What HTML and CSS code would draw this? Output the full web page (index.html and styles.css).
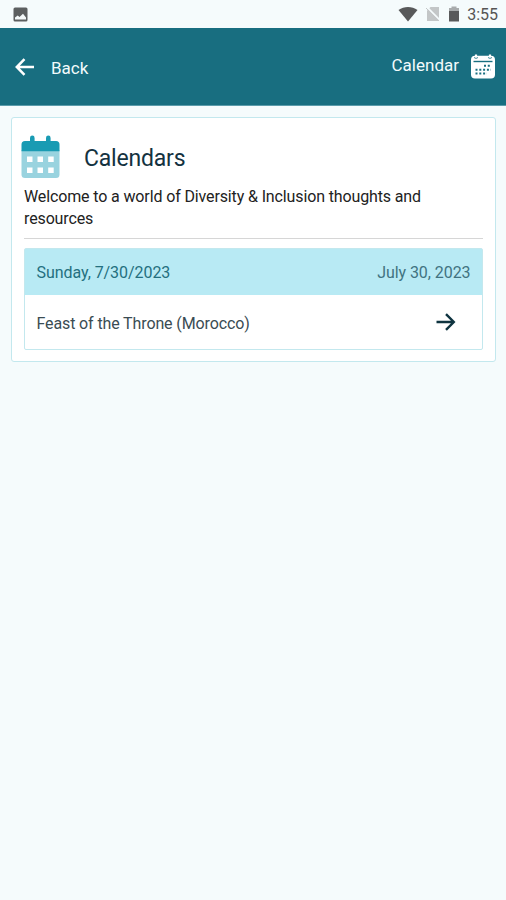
FILE: index.html
```html
<!DOCTYPE html>
<html lang="en">
<head>
  <meta charset="UTF-8" />
  <meta name="viewport" content="width=device-width, initial-scale=1.0" />
  <title>Calendar</title>
  <link rel="stylesheet" href="styles.css">
</head>
<body>

  <div class="statusbar">
    <svg class="status-photo" width="15" height="15" viewBox="0 0 15 15">
      <rect x="0.5" y="0.5" width="14" height="14" rx="1.5" fill="#5c5f60"/>
      <path d="M2 12.5V10.5L4.7 8.5L6.5 10L10 6.8L13 10.5V12.5Z" fill="#f4f9fa"/>
    </svg>
    <div class="status-icons">
      <svg width="20" height="16" viewBox="0 0 20 16">
        <path d="M0.5 4C6 0 14 0 19.5 4L10 15.5Z" fill="#58595a"/>
      </svg>
      <svg width="16" height="16" viewBox="0 0 16 16">
        <path d="M5.5 1H14V15H2V4.5Z" fill="#c3c6c7"/>
        <path d="M2 1.2L15.5 14.7" stroke="#f5fbfc" stroke-width="1.8"/>
        <path d="M1 2L14 15" stroke="#c3c6c7" stroke-width="1"/>
      </svg>
      <svg width="12" height="16" viewBox="0 0 12 16">
        <path d="M3.5 0.5H8.5V2H11V5H1V2H3.5Z" fill="#a8abac"/>
        <path d="M1 5H11V15.5H1Z" fill="#58595a"/>
      </svg>
      <span class="status-time">3:55</span>
    </div>
  </div>

  <div class="topbar">
    <a href="#" class="back-link">
      <svg width="20" height="18" viewBox="0 0 20 18">
        <path d="M19 9H2M9.5 1.2L1.8 9L9.5 16.8" fill="none" stroke="#fff" stroke-width="2.5"/>
      </svg>
      <span>Back</span>
    </a>
    <a href="#" class="calendar-link">
      <span>Calendar</span>
      <svg width="24" height="25" viewBox="0 0 24 25">
        <path d="M5 0.5V4M19 0.5V4" stroke="#fff" stroke-width="2.2"/>
        <rect x="0" y="1.8" width="24" height="22.7" rx="4" fill="#fff"/>
        <path d="M3 3.5Q5 5.4 7 3.5M17 3.5Q19 5.4 21 3.5" fill="none" stroke="#186e80" stroke-width="0.8"/>
        <path d="M2.5 7.5H21.5" stroke="#186e80" stroke-width="1.4"/>
        <path d="M13 11.7H20M4.5 15.7H20M4.5 19.5H16" stroke="#186e80" stroke-width="2" stroke-dasharray="2 1.8"/>
      </svg>
    </a>
  </div>

  <div class="card">
    <div class="card-title">
      <svg width="39" height="44" viewBox="0 0 39 44">
        <path d="M0.5 15H38.5V39.5Q38.5 43 35 43H4Q0.5 43 0.5 39.5Z" fill="#99d3df"/>
        <path d="M0.5 16.3V9.5Q0.5 6 4 6H9V3Q9 0.6 11.3 0.6T13.6 3V6H25V3Q25 0.6 27.3 0.6T29.6 3V6H35Q38.5 6 38.5 9.5V16.3Z" fill="#199bb3"/>
        <path d="M6 21.5h5.5v5.5H6z M16.5 21.5h5.5v5.5h-5.5z M27.2 21.5h5.5v5.5h-5.5z M6 32.5h5.5v5.5H6z M16.5 32.5h5.5v5.5h-5.5z M27.2 32.5h5.5v5.5h-5.5z" fill="#fff"/>
      </svg>
      <h1>Calendars</h1>
    </div>
    <p class="card-text">Welcome to a world of Diversity &amp; Inclusion thoughts and resources</p>

    <div class="event">
      <div class="event-header">
        <span>Sunday, 7/30/2023</span>
        <span class="event-date">July 30, 2023</span>
      </div>
      <a href="#" class="event-row">
        <span>Feast of the Throne (Morocco)</span>
        <svg width="20" height="18" viewBox="0 0 20 18">
          <path d="M0.5 9H18M10 1.2L17.8 9L10 16.8" fill="none" stroke="#0f3440" stroke-width="2.4"/>
        </svg>
      </a>
    </div>
  </div>

</body>
</html>
```

FILE: styles.css
```css
:root {
  --bg: #f5fbfc;
  --teal: #186e80;
  --light-blue: #b8eaf4;
  --card-border: #c3e8ee;
}

* {
  box-sizing: border-box;
}

body {
  margin: 0;
  min-height: 100vh;
  background-color: var(--bg);
  font-family: Roboto, sans-serif;
  font-size: 16px;
  color: #222;
}

a {
  color: inherit;
  text-decoration: none;
}

svg {
  display: block;
  flex-shrink: 0;
}

/* Status bar */
.statusbar {
  display: flex;
  justify-content: space-between;
  align-items: center;
  height: 28px;
  padding: 0 8px 0 13px;
}

.status-icons {
  display: flex;
  align-items: center;
  gap: 7px;
}

.status-time {
  font-size: 16px;
  line-height: 20px;
  color: #555;
  padding-top: 2px;
}

/* Header */
.topbar {
  display: flex;
  justify-content: space-between;
  align-items: center;
  height: 78px;
  padding: 0 11px 0 15px;
  background-color: var(--teal);
  border-bottom: 1px solid #5b9cab;
  color: #f2fbfc;
}

.back-link,
.calendar-link {
  display: flex;
  align-items: center;
}

.back-link {
  gap: 16px;
  font-size: 17px;
}

.back-link span {
  padding-top: 2px;
}

.calendar-link {
  gap: 12px;
  font-size: 17px;
}

.calendar-link span {
  padding-bottom: 3px;
}

/* Card */
.card {
  margin: 11px 10px 0 11px;
  padding: 17px 12px 11px;
  background-color: #fff;
  border: 1.5px solid var(--card-border);
  border-radius: 3px;
}

.card-title {
  display: flex;
  align-items: center;
  gap: 24px;
  margin-left: -3px;
}

.card-title h1 {
  margin: 0;
  padding-top: 2px;
  font-size: 23px;
  font-weight: 400;
  letter-spacing: -0.2px;
  color: #14323f;
}

.card-text {
  margin: 7px 0 9px;
  padding-bottom: 8px;
  border-bottom: 1px solid #d6d6d6;
  font-size: 16px;
  line-height: 22px;
  letter-spacing: -0.13px;
}

.event {
  border: 1px solid var(--card-border);
  border-radius: 2px;
}

.event-header,
.event-row {
  display: flex;
  justify-content: space-between;
  align-items: center;
}

.event-header {
  height: 46px;
  padding: 0 11.5px;
  background-color: var(--light-blue);
  color: #24707f;
  letter-spacing: -0.06px;
}

.event-date {
  color: #417381;
}

.event-row {
  height: 54px;
  padding: 0 26px 0 11.5px;
  color: #3a4c53;
  letter-spacing: -0.12px;
}

.event-row span {
  padding-top: 2px;
}
```
